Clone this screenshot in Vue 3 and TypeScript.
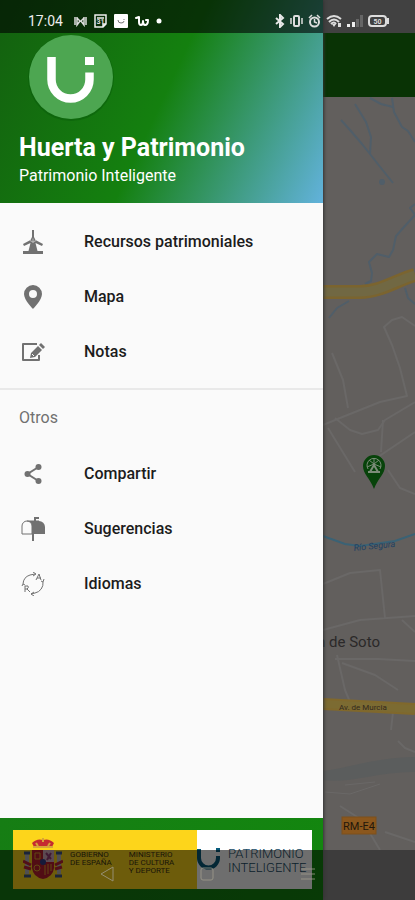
<script setup lang="ts">
type IconName = 'windmill' | 'pin' | 'note' | 'share' | 'mailbox' | 'cycle'

interface MenuItem {
  label: string
  icon: IconName
  href: string
}

const mainItems: MenuItem[] = [
  { label: 'Recursos patrimoniales', icon: 'windmill', href: '#recursos' },
  { label: 'Mapa', icon: 'pin', href: '#mapa' },
  { label: 'Notas', icon: 'note', href: '#notas' },
]

const otherItems: MenuItem[] = [
  { label: 'Compartir', icon: 'share', href: '#compartir' },
  { label: 'Sugerencias', icon: 'mailbox', href: '#sugerencias' },
  { label: 'Idiomas', icon: 'cycle', href: '#idiomas' },
]

const groups = [
  { title: '', items: mainItems },
  { title: 'Otros', items: otherItems },
]
</script>

<template>
  <div class="screen">
    <main class="page">
      <div class="page-status"></div>
      <div class="page-bar"></div>
      <div class="map">
        <svg class="map-canvas" viewBox="0 97 415 753" preserveAspectRatio="xMaxYMin slice">
          <rect x="0" y="97" width="415" height="753" fill="#625f5d" />
          <path d="M323 771C350 768 372 758 415 757V772C380 771 350 784 323 780Z" fill="#5b5d5d" />
          <g fill="none" stroke="#6a6867" stroke-width="2" stroke-linejoin="round">
            <path d="M415 326L402 317L392 320L384 327L392 345L400 368L407 396L380 402L340 418L323 425" />
            <path d="M332 353L343 380L348 408M335 418L350 430L362 434L378 430L385 420L415 402" />
            <path d="M383 420L381 452M378 457L415 432M388 470L400 488L415 494M328 428L355 472" />
            <path d="M323 584L350 573L380 570L385 618M323 630L360 620L415 616M402 620L415 632" />
            <path d="M335 659L378 659L415 661M337 655L345 690L350 702M342 663L375 675L398 690" />
            <path d="M393 712L391 730M398 741L405 748L415 752M340 806L362 820L380 850M385 832L415 842" />
            <path d="M325 792L350 794L380 784M345 785L375 782" stroke-width="1" />
          </g>
          <g fill="none" stroke="#505e69" stroke-width="2" stroke-linejoin="round">
            <path d="M341 120L350 130L362 144L370 154L381 168L393 183" />
            <path d="M355 104L366 122L371 137L370 154" />
            <path d="M370 98L381 104L393 107M392 98L394 112L402 127L408 131L415 142" />
            <path d="M415 204L410 208L415 215L404 227L396 236L393 250L389 257L377 254L369 262L372 273L371 281L365 284" />
            <path d="M405 288L408 298L415 304M329 318L337 308L349 301" />
          </g>
          <circle cx="382" cy="182" r="3" fill="#505e69" />
          <path d="M323 292H360C380 292 397 280 415 275" fill="none" stroke="#7b642f" stroke-width="14" />
          <path d="M323 292H360C380 292 397 280 415 275" fill="none" stroke="#716843" stroke-width="9" />
          <path d="M323 536L345 544L360 546L395 541L415 534" fill="none" stroke="#3a6275" stroke-width="2" />
          <path d="M323 704L415 709" fill="none" stroke="#80682c" stroke-width="12" />
          <path d="M323 704L415 709" fill="none" stroke="#7c6b32" stroke-width="8" />
          <text class="map-water" x="354" y="551" transform="rotate(-6 354 551)">Río Segura</text>
          <text class="map-town" x="380" y="647" text-anchor="end">n de Soto</text>
          <text class="map-road" x="339" y="710">Av. de Murcia</text>
          <rect x="342" y="817" width="34" height="17" fill="#8b571d" stroke="#7d501c" />
          <text class="map-code" x="359" y="830" text-anchor="middle">RM-E4</text>
          <path d="M374 489C370 478 363 474 363 466A11 11 0 0 1 385 466C385 474 378 478 374 489Z" fill="#07430a" />
          <g fill="none" stroke="#7b8c78" stroke-width="1">
            <path d="M368 469A7 7 0 1 1 380 469M374 458V464L367 467M374 464L381 467M369 460L374 464L379 460" />
            <path d="M370 472L374 465L378 472M368 472H380" stroke-width="2" />
          </g>
        </svg>
      </div>
      <div class="page-nav"></div>
    </main>

    <aside class="drawer">
      <header class="drawer-header">
        <svg class="avatar" viewBox="0 0 88 88">
          <circle cx="44" cy="45" r="43" fill="#075b0a" opacity=".5" />
          <circle cx="44" cy="44" r="42" fill="#4da651" />
          <path d="M24.500 24V46.500A19 19 0 0 0 62.500 46.500V39.500" fill="none" stroke="#fff" stroke-width="8.500" />
          <rect x="58" y="24" width="9" height="8" fill="#fff" />
        </svg>
        <h1>Huerta y Patrimonio</h1>
        <p>Patrimonio Inteligente</p>
      </header>

      <nav class="menu">
        <section v-for="group in groups" :key="group.title" class="group">
          <h2 v-if="group.title">{{ group.title }}</h2>
          <a v-for="item in group.items" :key="item.label" :href="item.href" class="item">
            <svg v-if="item.icon === 'windmill'" class="icon" viewBox="0 0 24 24">
              <path d="M11 0H13V7L14.500 10L22 14L21 16L14.500 13L16.500 21H22V24H2V21H7.500L9.500 13L3 16L2 14L9.500 10L11 7Z" fill="currentColor" />
              <path d="M12 8.500V13M9 10.500L12 12L15 10.500" fill="none" stroke="#bbb" stroke-width="1" />
            </svg>
            <svg v-else-if="item.icon === 'pin'" class="icon" viewBox="0 0 24 24">
              <path fill-rule="evenodd" d="M12 0A9 9 0 0 0 3 9C3 15 12 24 12 24S21 15 21 9A9 9 0 0 0 12 0ZM12 5A4 4 0 1 1 12 13A4 4 0 0 1 12 5Z" fill="currentColor" />
            </svg>
            <svg v-else-if="item.icon === 'note'" class="icon" viewBox="0 0 24 24">
              <path d="M16 4H2V20H18V15" fill="none" stroke="currentColor" stroke-width="2" stroke-linejoin="round" />
              <path d="M9 18L10 13L17 6L21 10L14 17ZM18 5L20 3L24 7L22 9Z" fill="currentColor" />
              <path d="M11 14L13 16" stroke="#fafafa" stroke-width="1" />
            </svg>
            <svg v-else-if="item.icon === 'share'" class="icon" viewBox="0 0 24 24">
              <path d="M17.500 5L6.500 12L17.500 19" fill="none" stroke="currentColor" stroke-width="2" />
              <g fill="currentColor"><circle cx="17.500" cy="5" r="3" /><circle cx="6.500" cy="12" r="3" /><circle cx="17.500" cy="19" r="3" /></g>
            </svg>
            <svg v-else-if="item.icon === 'mailbox'" class="icon" viewBox="0 0 24 24">
              <path d="M1 17V9A5 5 0 0 1 11 9V17ZM6 4H18" fill="none" stroke="currentColor" stroke-width="1" />
              <path d="M7 4H13V0H18V2H15V4H18A6 6 0 0 1 24 10V17H11V9Q11 5 7 4ZM11 17H13V24H11Z" fill="currentColor" />
            </svg>
            <svg v-else class="icon" viewBox="0 0 24 24">
              <g fill="none" stroke="currentColor" stroke-width="1">
                <path d="M2 12A10 10 0 0 1 9 3L14 2M12 0L15 2L12 4" />
                <path d="M22 10A10 10 0 0 1 14 21L10 22M13 20L10 22L13 24" />
                <path d="M15 8L18 2L20 8M16 6H20M20 9L22 10L23 7" />
                <path d="M4 20V14H7Q8 16 6 17H4M6 17L9 20M1 14L2 12L4 13" />
              </g>
            </svg>
            <span>{{ item.label }}</span>
          </a>
        </section>
      </nav>

      <footer class="sponsors">
        <div class="ministry">
          <svg class="crest" viewBox="0 0 40 42">
            <path d="M11 9L9 5Q14 0 20 2Q26 0 31 5L29 9Z" fill="#c52b31" />
            <path d="M10 9H30M20 0V4M13 5L15 8M27 5L25 8" stroke="#d7a638" stroke-width="2" />
            <path d="M9 12H31V30Q30 39 20 41Q10 39 9 30Z" fill="#bb2030" />
            <path d="M20 12H31V24H20Z" fill="#d5acbd" />
            <path d="M23 15L28 21M28 15L24 22" stroke="#953b76" stroke-width="2" />
            <path d="M12 15H17V21H12ZM22 27V37M25 26V36M28 26V33" stroke="#e1a42c" fill="none" stroke-width="1" />
            <circle cx="14" cy="30" r="3" fill="none" stroke="#e1a42c" />
            <circle cx="20" cy="24" r="3" fill="#343d88" />
            <path d="M4 16V36M36 16V36" stroke="#b9b8bb" stroke-width="4" />
            <path d="M0 23L8 27M1 29L8 31M40 23L32 27M39 29L32 31" stroke="#be2637" stroke-width="3" />
            <path d="M1 38H8M32 38H39M1 15H7M33 15H39" stroke="#405585" stroke-width="3" />
          </svg>
          <p>GOBIERNO<br />DE ESPAÑA</p>
          <p>MINISTERIO<br />DE CULTURA<br />Y DEPORTE</p>
        </div>
        <div class="brand">
          <svg class="brand-mark" viewBox="0 0 24 24">
            <path d="M2 2V11A9.500 9.500 0 0 0 21 11V9" fill="none" stroke="#075b7c" stroke-width="4" />
            <rect x="19" y="1" width="4" height="4" fill="#075b7c" />
          </svg>
          <p>PATRIMONIO<br />INTELIGENTE</p>
        </div>
      </footer>
    </aside>

    <div class="status">
      <div class="status-group">
        <time>17:04</time>
        <svg width="13" height="12" viewBox="0 0 13 12"><path d="M1 2V10M3 2V10L6 6L3 3M12 2V10M10 2V10L7 6L10 3" fill="none" stroke="#ddd" stroke-width="1.500" /></svg>
        <svg width="13" height="14" viewBox="0 0 13 14"><path d="M1 1H12V10L9 13H1ZM12 10H9V13M3 4H10" fill="none" stroke="#eee" stroke-width="1.500" /><text x="6.500" y="10" text-anchor="middle" class="tiny-number">31</text></svg>
        <svg width="14" height="14" viewBox="0 0 14 14"><rect width="14" height="14" rx="1" fill="#fff" /><path d="M4 6Q4 9 7 9T10 7M10 5V6" fill="none" stroke="#777" stroke-width="1" /></svg>
        <svg width="14" height="12" viewBox="0 0 14 12"><path d="M1 3L4 2V7Q4 10 6 10Q8 10 8 6Q8 10 10 10Q13 10 13 5L11 5" fill="none" stroke="#fff" stroke-width="2" stroke-linecap="round" stroke-linejoin="round" /></svg>
        <svg width="6" height="6" viewBox="0 0 6 6"><circle cx="3" cy="3" r="2.500" fill="#fff" /></svg>
      </div>
      <div class="status-group status-right">
        <svg width="10" height="14" viewBox="0 0 10 14"><path d="M1 4L8 10L5 13V1L8 4L1 10" fill="none" stroke="#e8e8e8" stroke-width="2" /></svg>
        <svg width="13" height="14" viewBox="0 0 13 14"><rect x="4" y="2" width="5" height="10" rx="1" fill="none" stroke="#ddd" stroke-width="2" /><path d="M1 4V10M12 4V10" stroke="#ddd" stroke-width="1.500" /></svg>
        <svg width="13" height="14" viewBox="0 0 13 14"><circle cx="6.500" cy="8" r="4.500" fill="none" stroke="#ddd" stroke-width="2" /><path d="M1 4L4 1M12 4L9 1M6.500 5V8L9 9" fill="none" stroke="#ddd" stroke-width="1.500" /></svg>
        <svg width="16" height="14" viewBox="0 0 16 14"><path d="M1 5Q8-1 15 5M3 8Q8 3 13 8M5 10Q8 7 10 10" fill="none" stroke="#ddd" stroke-width="2" /><path d="M8 13L6 10H10ZM12 9H15V13H12Z" fill="#ddd" /></svg>
        <svg width="16" height="12" viewBox="0 0 16 12"><path d="M0 9H3V12H0ZM5 7H8V12H5Z" fill="#eee" /><path d="M9 4H12V12H9ZM13 0H16V12H13Z" fill="#666" /></svg>
        <svg width="21" height="12" viewBox="0 0 21 12"><rect x="1" y="1" width="17" height="10" rx="3" fill="none" stroke="#ddd" stroke-width="2" /><path d="M20 3V9" stroke="#ddd" stroke-width="2" /><text x="9.500" y="9" text-anchor="middle" class="tiny-number">50</text></svg>
      </div>
    </div>

    <div class="system-nav">
      <button type="button" aria-label="Atrás">
        <svg width="16" height="18" viewBox="0 0 16 18"><path d="M14 2V16L2 9Z" /></svg>
      </button>
      <button type="button" aria-label="Inicio">
        <svg width="16" height="16" viewBox="0 0 16 16"><rect x="2" y="2" width="12" height="12" rx="2" /></svg>
      </button>
      <button type="button" aria-label="Recientes">
        <svg width="16" height="16" viewBox="0 0 16 16"><path d="M1 3H15M1 8H15M1 13H15" /></svg>
      </button>
    </div>
  </div>
</template>

<style>
body {
  margin: 0;
  background: #625f5d;
}
</style>

<style scoped>
.screen {
  position: relative;
  display: grid;
  min-height: 100vh;
  overflow: hidden;
  font-family: Roboto, "Liberation Sans", sans-serif;
}

h1,
h2,
p {
  margin: 0;
  font-weight: 400;
}

.page {
  display: grid;
  grid-template-rows: 33px 64px 1fr 50px;
}

.page-status {
  background: #414141;
}

.page-bar {
  background: #093305;
}

.page-nav {
  background: #3d3c3c;
}

.map {
  position: relative;
}

.map-canvas {
  position: absolute;
  width: 100%;
  height: 100%;
}

.map-water {
  font-size: 9px;
  font-style: italic;
  fill: #203f62;
}

.map-town {
  font-size: 15px;
  fill: #2b2929;
}

.map-road {
  font-size: 8px;
  fill: #33291d;
}

.map-code {
  font-size: 11px;
  fill: #24170b;
}

.drawer {
  position: absolute;
  inset: 0 92px 0 0;
  display: flex;
  flex-direction: column;
  background: #fafafa;
  box-shadow: 1px 0 3px #333;
}

.drawer::before,
.drawer::after {
  content: "";
  position: absolute;
  inset: 0 0 auto;
  height: 33px;
  background: rgb(0 0 0 / 60%);
}

.drawer::after {
  inset: auto 0 0;
  height: 50px;
  background: rgb(0 0 0 / 57%);
}

.drawer-header {
  box-sizing: border-box;
  height: 203px;
  padding: 33px 19px 0;
  color: #fff;
  background: linear-gradient(115deg, #13600f 0%, #14800f 50%, #62b2dc 100%);
}

.avatar {
  display: block;
  width: 88px;
  height: 88px;
  margin: 0 0 11px 8px;
}

.drawer-header h1 {
  font-size: 25px;
  font-weight: 700;
  line-height: 32px;
  white-space: nowrap;
}

.drawer-header p {
  font-size: 16px;
  line-height: 24px;
}

.menu {
  flex: 1;
}

.group {
  padding-bottom: 9px;
}

.group:first-child {
  padding-top: 11px;
  border-bottom: 2px solid #e9e9e9;
}

.group h2 {
  padding-left: 19px;
  font-size: 16px;
  line-height: 56px;
  color: #707070;
}

.item {
  display: flex;
  align-items: center;
  gap: 39px;
  height: 55px;
  padding-left: 21px;
  font-size: 16px;
  font-weight: 500;
  color: #1c1c1c;
  text-decoration: none;
}

.icon {
  width: 24px;
  height: 24px;
  color: #717171;
}

.sponsors {
  display: grid;
  grid-template-columns: 8fr 5fr;
  box-sizing: border-box;
  height: 82px;
  padding: 12px 11px 11px 13px;
  background: linear-gradient(100deg, #167d14, #13860f);
}

.ministry {
  display: flex;
  align-items: flex-start;
  min-width: 0;
  padding: 8px 0 0 10px;
  font-size: 8px;
  line-height: 8px;
  color: #3d3514;
  background: #fdd51b;
}

.crest {
  flex: none;
  width: 40px;
  height: 42px;
}

.ministry p {
  padding: 13px 0 0 7px;
  white-space: nowrap;
}

.ministry p:last-child {
  padding-left: 17px;
}

.brand {
  display: flex;
  gap: 7px;
  align-items: flex-start;
  min-width: 0;
  padding-top: 17px;
  background: #fff;
}

.brand-mark {
  flex: none;
  width: 24px;
  height: 24px;
}

.brand p {
  font-size: 13px;
  font-weight: 300;
  line-height: 14px;
  color: #174b65;
}

.status {
  position: absolute;
  inset: 0 0 auto;
  display: flex;
  align-items: center;
  justify-content: space-between;
  height: 33px;
  padding: 9px 26px 0 28px;
  box-sizing: border-box;
  font-size: 14px;
  color: #eee;
}

.status-group {
  display: flex;
  align-items: center;
  gap: 7px;
}

.status-group time {
  margin-right: 4px;
}

.status-right {
  gap: 5px;
}

.tiny-number {
  font-size: 7px;
  font-weight: 700;
  fill: #ddd;
}

.system-nav {
  position: absolute;
  inset: auto 0 0;
  display: grid;
  grid-template-columns: repeat(3, 1fr);
  justify-items: center;
  height: 50px;
  padding: 0 57px;
}

.system-nav button {
  width: 48px;
  padding: 0;
  border: 0;
  background: none;
}

.system-nav svg {
  fill: none;
  stroke: #a09c8c;
  stroke-width: 1px;
  opacity: 0.8;
}
</style>
